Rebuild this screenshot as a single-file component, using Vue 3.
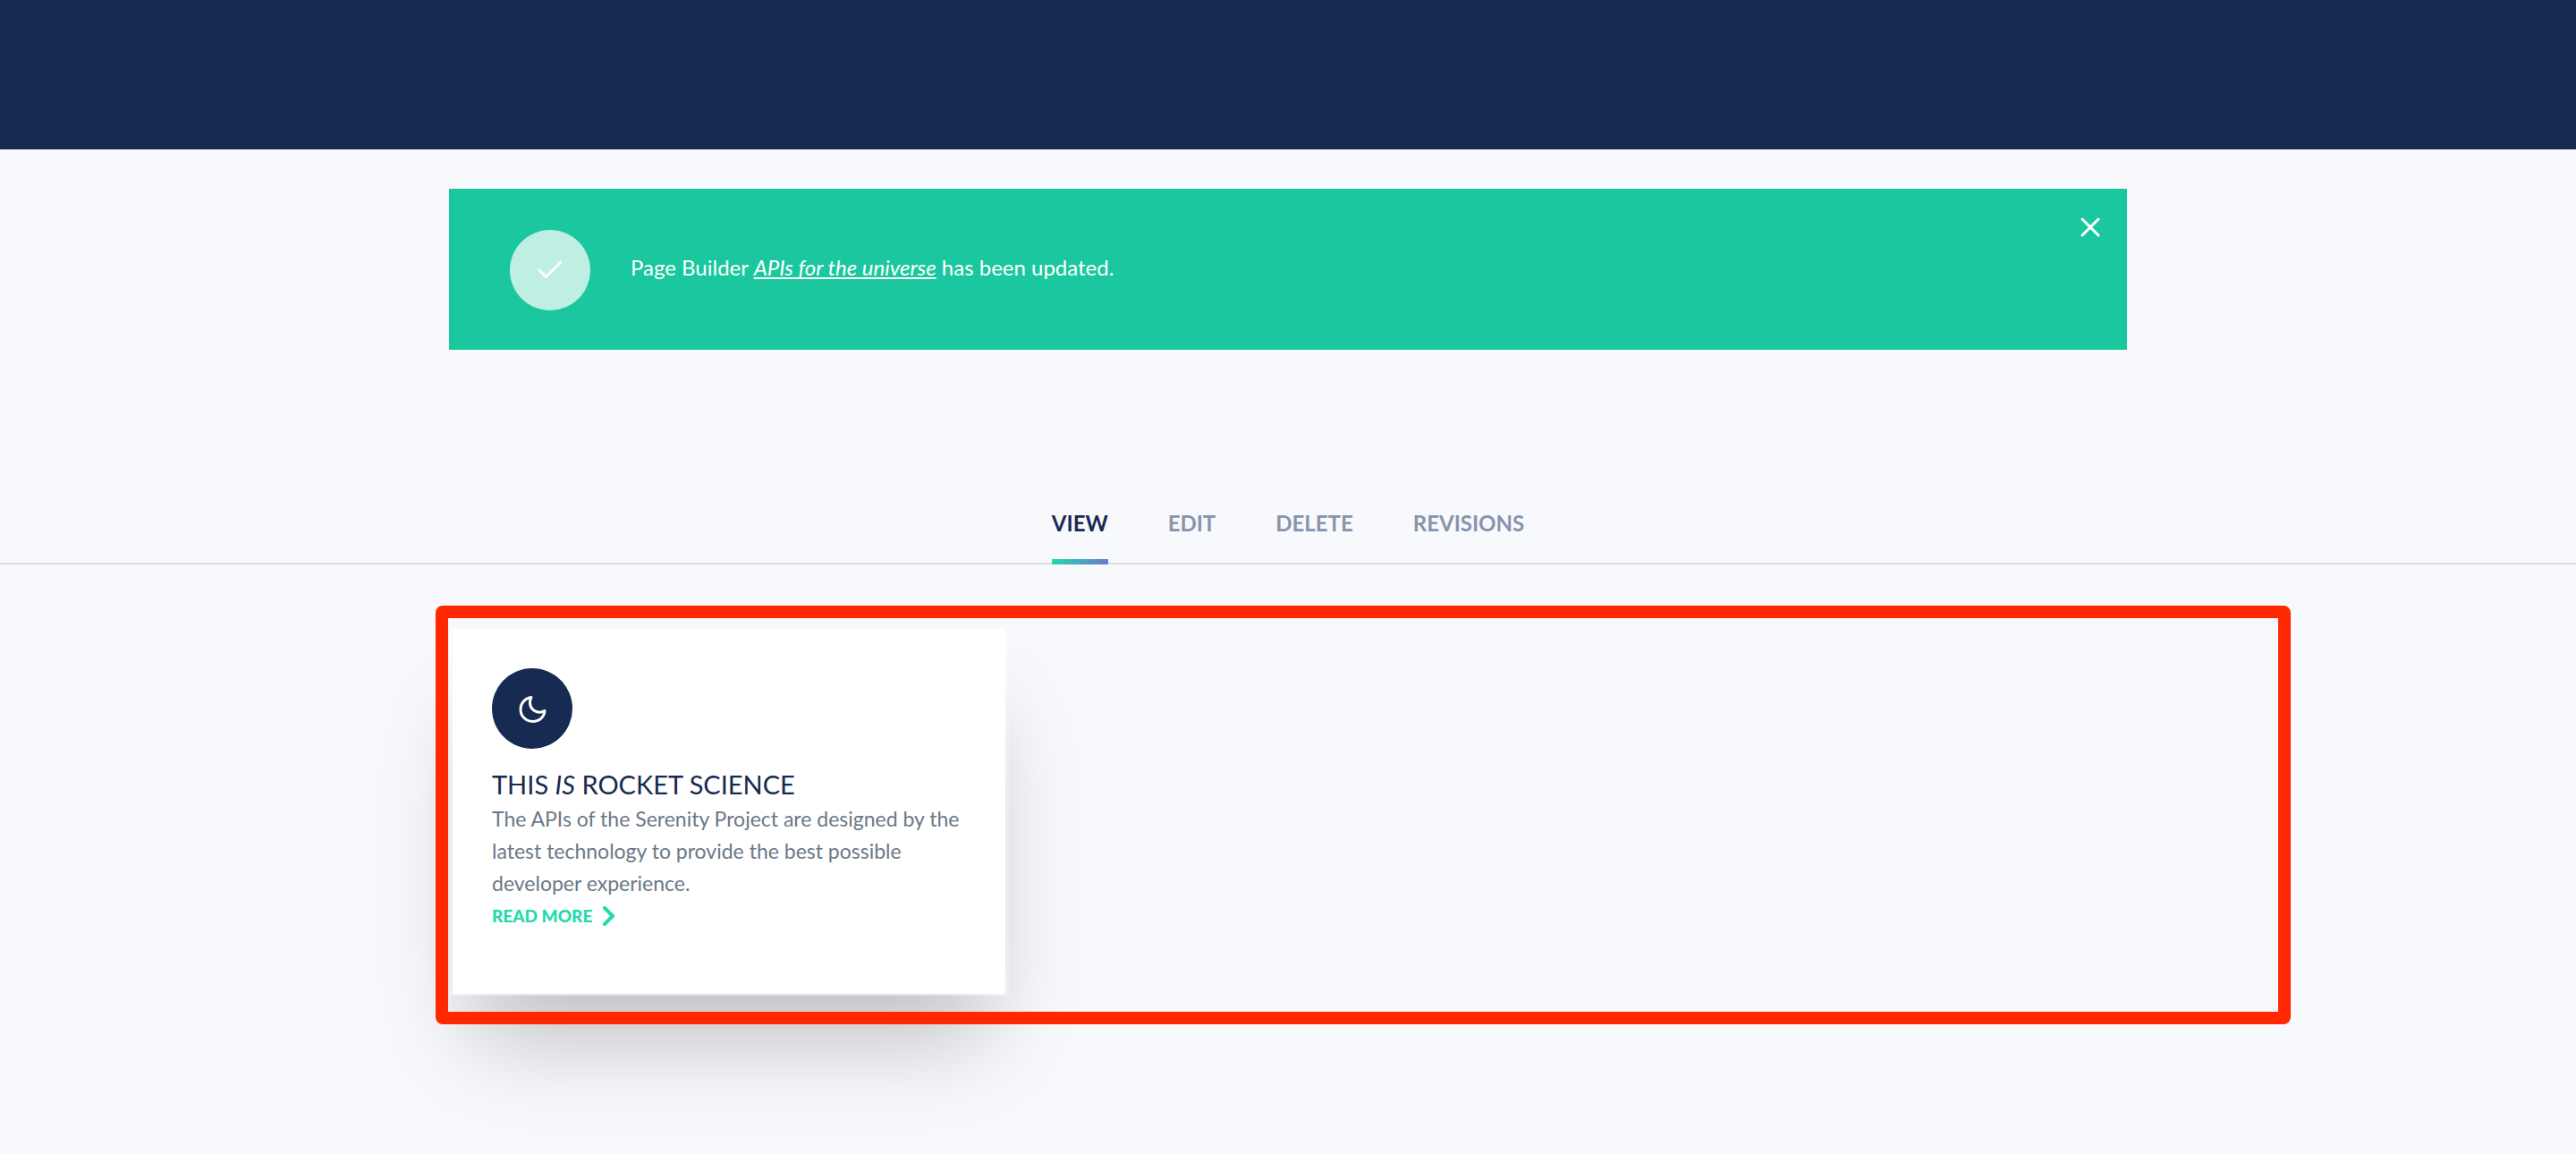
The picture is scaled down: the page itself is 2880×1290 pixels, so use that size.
<script setup>
import { ref } from 'vue'

const alertOpen = ref(true)
const tabs = ['View', 'Edit', 'Delete', 'Revisions']
const current = ref('View')
</script>

<template>
  <div class="page">
    <header class="masthead"></header>

    <div class="container">
      <div v-if="alertOpen" class="alert" role="status">
        <span class="badge badge-success">
          <svg width="30" height="24" viewBox="0 0 30 24" fill="none" stroke="#fff" stroke-width="3" stroke-linecap="round" stroke-linejoin="round">
            <path d="M3 12 L10.5 19.500 L27 3" />
          </svg>
        </span>
        <p class="message">Page Builder <a href="#"><em>APIs for the universe</em></a> has been updated.</p>
        <button class="close" type="button" aria-label="Close" @click="alertOpen = false">
          <svg width="22" height="22" viewBox="0 0 22 22" stroke="#fff" stroke-width="3" stroke-linecap="round">
            <path d="M2 2 L20 20 M20 2 L2 20" />
          </svg>
        </button>
      </div>
    </div>

    <nav class="tabs">
      <a v-for="tab in tabs" :key="tab" href="#" class="tab" :class="{ active: tab === current }" @click.prevent="current = tab">{{ tab }}</a>
    </nav>

    <main class="outline">
      <article class="card">
        <span class="badge badge-dark">
          <svg width="32" height="32" viewBox="0 0 32 32" fill="none" stroke="#fff" stroke-width="3" stroke-linecap="round" stroke-linejoin="round">
            <path d="M15 3.500 C8 4.500 3 10 3 17 C3 24.500 9 30.500 16.500 30.500 C24 30.500 29.500 25.500 30 18.500 C27 20.800 22 20.800 18.500 18.500 C13.500 15.500 12 9 15 3.500 Z" />
          </svg>
        </span>
        <h2>This <em>is</em> rocket science</h2>
        <p class="text">The APIs of the Serenity Project are designed by the latest technology to provide the best possible developer experience.</p>
        <a href="#" class="more">Read more
          <svg width="14" height="22" viewBox="0 0 14 22" fill="none" stroke="currentColor" stroke-width="4" stroke-linecap="round" stroke-linejoin="round">
            <path d="M2 2 L11 11 L2 20" />
          </svg>
        </a>
      </article>
    </main>
  </div>
</template>

<style>
body {
  margin: 0;
  background: #f8f9fd;
}
</style>

<style scoped>
.page {
  overflow: hidden;
  padding-bottom: 144px;
  font-family: Lato, sans-serif;
  font-size: 24px;
  line-height: 36px;
}

.masthead {
  height: 167px;
  background: #172a51;
}

.container {
  padding: 44px 502px 0;
}

.alert {
  position: relative;
  display: flex;
  align-items: center;
  gap: 45px;
  height: 180px;
  padding: 2px 68px 0;
  box-sizing: border-box;
  background: #1bc79e;
  color: #fff;
}

.badge {
  display: flex;
  flex: none;
  align-items: center;
  justify-content: center;
  width: 90px;
  height: 90px;
  border-radius: 50%;
}

.badge-success {
  background: #bfeee2;
}

.badge-dark {
  background: #172a51;
}

.message {
  margin: 0;
  padding-bottom: 6px;
}

.message a {
  color: inherit;
  text-underline-offset: 2px;
  text-decoration-thickness: 2px;
  text-decoration-skip-ink: none;
}

.close {
  position: absolute;
  top: 32px;
  right: 30px;
  display: flex;
  padding: 0;
  border: 0;
  background: none;
  cursor: pointer;
}

.tabs {
  display: flex;
  justify-content: center;
  gap: 67px;
  margin-top: 176px;
  border-bottom: 2px solid #dcdee6;
}

.tab {
  height: 58px;
  margin-bottom: -2px;
  border-bottom: 6px solid transparent;
  font-weight: 700;
  color: #8794ab;
  text-decoration: none;
  text-transform: uppercase;
}

.tab.active {
  color: #172a51;
  border-image: linear-gradient(90deg, #20dbab, #6a78d1) 1;
}

.outline {
  position: relative;
  margin: 46px 319px 0 487px;
  padding: 26px 19px 34px;
}

/* drawn over the card's shadow */
.outline::after {
  content: "";
  position: absolute;
  inset: 0;
  border: 14px solid #ff2800;
  border-radius: 8px;
  pointer-events: none;
}

.card {
  box-sizing: border-box;
  width: 618px;
  min-height: 408px;
  padding: 44px;
  background: #fff;
  box-shadow:
    4px 2px 0 rgba(255, 255, 255, 0.25),
    -4px 2px 0 rgba(255, 255, 255, 0.25),
    0 72px 100px -22px rgba(0, 0, 0, 0.23);
}

h2 {
  margin: 20px 0 0;
  font-size: 29px;
  font-weight: 400;
  line-height: 40px;
  color: #172a51;
  text-transform: uppercase;
}

.text {
  margin: 0;
  font-size: 23px;
  color: #6b7886;
}

.more {
  display: flex;
  align-items: center;
  gap: 12px;
  margin-top: 1px;
  font-size: 19px;
  font-weight: 900;
  color: #20dbab;
  text-decoration: none;
  text-transform: uppercase;
}
</style>
